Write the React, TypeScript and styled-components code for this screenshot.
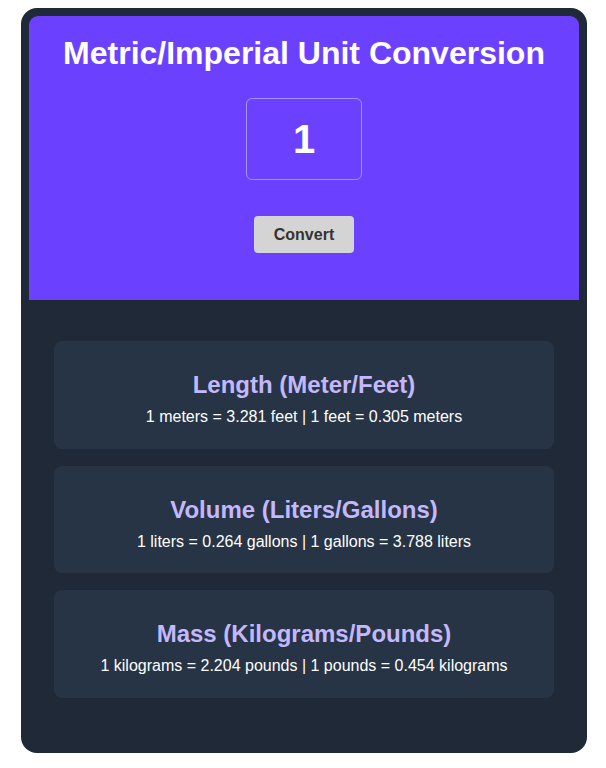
import React, { useState } from "react";
import styled, { createGlobalStyle } from "styled-components";

const Global = createGlobalStyle`
  html, body { margin: 0; padding: 0; background: #ffffff; }
  body { font-family: "Liberation Sans", Arial, sans-serif; }
  * { box-sizing: border-box; }
`;

const Frame = styled.div`
  width: 566px;
  height: 745px;
  margin: 8px 0 0 21px;
  padding: 8px;
  background: #1f2937;
  border-radius: 16px;
`;

const Inner = styled.div`
  height: 100%;
  border-radius: 9px;
  overflow: hidden;
  display: flex;
  flex-direction: column;
  background: #1f2937;
`;

const Header = styled.header`
  height: 284px;
  background: #6b41ff;
  display: flex;
  flex-direction: column;
  align-items: center;
  padding-top: 19px;
`;

const Title = styled.h1`
  margin: 0;
  color: #ffffff;
  font-size: 32px;
  font-weight: 700;
  line-height: 37px;
`;

const NumberInput = styled.input`
  margin-top: 26px;
  width: 116px;
  height: 82px;
  border: 1px solid rgba(255, 255, 255, 0.42);
  border-radius: 6px;
  background: transparent;
  color: #ffffff;
  font-family: "Liberation Sans", Arial, sans-serif;
  font-size: 40px;
  font-weight: 700;
  text-align: center;
  outline: none;
  padding: 0;
`;

const ConvertButton = styled.button`
  margin-top: 36px;
  width: 100px;
  height: 37px;
  border: none;
  border-radius: 4px;
  background: #d4d4d4;
  color: #333333;
  font-family: "Liberation Sans", Arial, sans-serif;
  font-size: 16px;
  font-weight: 700;
  cursor: pointer;
`;

const Results = styled.section`
  flex: 1;
  display: flex;
  flex-direction: column;
  gap: 17px;
  padding: 41px 25px 0;
`;

const Card = styled.div<{ $h: number }>`
  height: ${(p) => p.$h}px;
  background: #263446;
  border-radius: 8px;
  display: flex;
  flex-direction: column;
  align-items: center;
  padding-top: 30px;
`;

const CardTitle = styled.h3`
  margin: 0;
  color: #c4b8fd;
  font-size: 24px;
  font-weight: 700;
  line-height: 28px;
`;

const CardText = styled.p`
  margin: 9px 0 0;
  color: #ffffff;
  font-size: 16px;
  line-height: 18px;
`;

const round = (n: number) => n.toFixed(3);

export default function App() {
  const [value, setValue] = useState("1");
  const [n, setN] = useState(1);

  const rows = [
    {
      title: "Length (Meter/Feet)",
      text: `${n} meters = ${round(n * 3.281)} feet | ${n} feet = ${round(n * 0.3048)} meters`,
      h: 108,
    },
    {
      title: "Volume (Liters/Gallons)",
      text: `${n} liters = ${round(n * 0.264)} gallons | ${n} gallons = ${round(n * 3.788)} liters`,
      h: 107,
    },
    {
      title: "Mass (Kilograms/Pounds)",
      text: `${n} kilograms = ${round(n * 2.204)} pounds | ${n} pounds = ${round(n * 0.4536)} kilograms`,
      h: 108,
    },
  ];

  return (
    <>
      <Global />
      <Frame>
        <Inner>
          <Header>
            <Title>Metric/Imperial Unit Conversion</Title>
            <NumberInput
              value={value}
              onChange={(e) => setValue(e.target.value)}
            />
            <ConvertButton onClick={() => setN(Number(value) || 0)}>
              Convert
            </ConvertButton>
          </Header>
          <Results>
            {rows.map((r) => (
              <Card key={r.title} $h={r.h}>
                <CardTitle>{r.title}</CardTitle>
                <CardText>{r.text}</CardText>
              </Card>
            ))}
          </Results>
        </Inner>
      </Frame>
    </>
  );
}
